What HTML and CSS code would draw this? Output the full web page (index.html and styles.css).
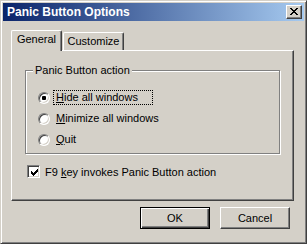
FILE: index.html
```html
<!DOCTYPE html>
<html lang="en">
<head>
  <meta charset="UTF-8">
  <title>Panic Button Options</title>
  <link rel="stylesheet" href="styles.css">
</head>
<body>
  <div class="window">
    <div class="titlebar">
      <span class="title">Panic Button Options</span>
      <span class="close">
        <svg width="8" height="7" viewBox="0 0 8 7" shape-rendering="crispEdges"><path fill="#000" d="M0 0h2v1H0z M6 0h2v1H6z M1 1h2v1H1z M5 1h2v1H5z M2 2h4v1H2z M3 3h2v1H3z M2 4h4v1H2z M1 5h2v1H1z M5 5h2v1H5z M0 6h2v1H0z M6 6h2v1H6z"/></svg>
      </span>
    </div>

    <div class="client">
      <div class="tabs">
        <div class="tab active">General</div>
        <div class="tab">Customize</div>
      </div>

      <div class="panel">
        <fieldset class="group">
          <legend>Panic Button action</legend>
          <div class="option">
            <span class="radio checked"></span>
            <span class="label focus"><u>H</u>ide all windows</span>
          </div>
          <div class="option">
            <span class="radio"></span>
            <span class="label"><u>M</u>inimize all windows</span>
          </div>
          <div class="option">
            <span class="radio"></span>
            <span class="label"><u>Q</u>uit</span>
          </div>
        </fieldset>

        <div class="check-row">
          <span class="checkbox">
            <svg width="7" height="7" viewBox="0 0 7 7" shape-rendering="crispEdges"><path fill="#000" d="M0 2h1v3H0z M1 3h1v3H1z M2 4h1v3H2z M3 3h1v3H3z M4 2h1v3H4z M5 1h1v3H5z M6 0h1v3H6z"/></svg>
          </span>
          <span class="check-label">F9 <u>k</u>ey invokes Panic Button action</span>
        </div>
      </div>

      <div class="buttons">
        <button class="btn default">OK</button>
        <button class="btn">Cancel</button>
      </div>
    </div>
  </div>
</body>
</html>
```

FILE: styles.css
```css
body {
  margin: 0;
  background: #d4d0c8;
  font-family: 'Liberation Sans', Arial, sans-serif;
  font-size: 11px;
  color: #000;
}
.window {
  width: 307px;
  height: 244px;
  box-sizing: border-box;
  border: 1px solid;
  border-color: #d4d0c8 #404040 #404040 #d4d0c8;
  box-shadow: inset 1px 1px #fff, inset -1px -1px #808080;
  padding: 2px;
  background: #d4d0c8;
}
.titlebar {
  height: 18px;
  display: flex;
  align-items: center;
  padding: 0 2px;
  background: linear-gradient(to right, #0a246a, #a6caf0);
  color: #fff;
  font-weight: bold;
  font-size: 12px;
}
.title {
  flex: 1;
  padding-left: 2px;
}
.close {
  width: 16px;
  height: 14px;
  box-sizing: border-box;
  border: 1px solid;
  border-color: #fff #404040 #404040 #fff;
  box-shadow: inset -1px -1px #808080;
  background: #d4d0c8;
  padding: 2px 0 0 3px;
}
.close svg {
  display: block;
}
.client {
  padding: 9px 0 0 8px;
}
.tabs {
  display: flex;
  align-items: flex-end;
  height: 20px;
  position: relative;
  z-index: 1;
}
.tab {
  height: 18px;
  box-sizing: border-box;
  border: 1px solid;
  border-bottom: none;
  border-color: #fff #404040 #fff #fff;
  box-shadow: inset -1px 0 #808080;
  border-radius: 2px 2px 0 0;
  background: #d4d0c8;
  text-align: center;
  line-height: 16px;
  width: 61px;
  margin-left: 1px;
}
.tab.active {
  width: 51px;
  height: 21px;
  margin-left: 0;
  margin-bottom: -1px;
  line-height: 16px;
}
.panel {
  width: 283px;
  height: 151px;
  box-sizing: border-box;
  border: 1px solid;
  border-color: #fff #404040 #404040 #fff;
  box-shadow: inset -1px -1px #808080;
  padding: 12px 0 0 13px;
}
.group {
  width: 255px;
  height: 91px;
  box-sizing: border-box;
  margin: 0;
  padding: 10px 0 0 0;
  border: 1px solid #808080;
  box-shadow: 1px 1px #fff, inset 1px 1px #fff;
}
.group legend {
  margin-left: 7px;
  padding: 0 2px;
  line-height: 14px;
  background: #d4d0c8;
}
.option {
  display: flex;
  align-items: center;
  height: 21px;
  padding-left: 12px;
}
.radio {
  width: 12px;
  height: 12px;
  box-sizing: border-box;
  border-radius: 50%;
  border: 1px solid;
  border-color: #808080 #fff #fff #808080;
  box-shadow: inset 1px 1px #404040, inset -1px -1px #d4d0c8;
  background: #fff;
}
.radio.checked {
  background: radial-gradient(circle, #000 2px, #fff 2.5px);
}
.label {
  margin-left: 3px;
  padding: 0 2px;
  line-height: 13px;
  border: 1px solid transparent;
}
.label.focus {
  border: 1px dotted #000;
  width: 94px;
}
.check-row {
  display: flex;
  align-items: center;
  margin: 11px 0 0 2px;
}
.checkbox {
  width: 13px;
  height: 13px;
  box-sizing: border-box;
  border: 1px solid;
  border-color: #808080 #fff #fff #808080;
  box-shadow: inset 1px 1px #404040, inset -1px -1px #d4d0c8;
  background: #fff;
  padding: 3px 0 0 3px;
}
.checkbox svg {
  display: block;
}
.check-label {
  margin-left: 5px;
}
.buttons {
  display: flex;
  gap: 10px;
  margin: 6px 0 0 129px;
}
.btn {
  width: 70px;
  height: 22px;
  box-sizing: border-box;
  border: 1px solid;
  border-color: #fff #404040 #404040 #fff;
  box-shadow: inset -1px -1px #808080;
  background: #d4d0c8;
  font-family: inherit;
  font-size: 11px;
  color: #000;
  padding: 0;
}
.btn.default {
  border-color: #000;
  box-shadow: inset 1px 1px #fff, inset -1px -1px #404040, inset -2px -2px #808080;
}
```
